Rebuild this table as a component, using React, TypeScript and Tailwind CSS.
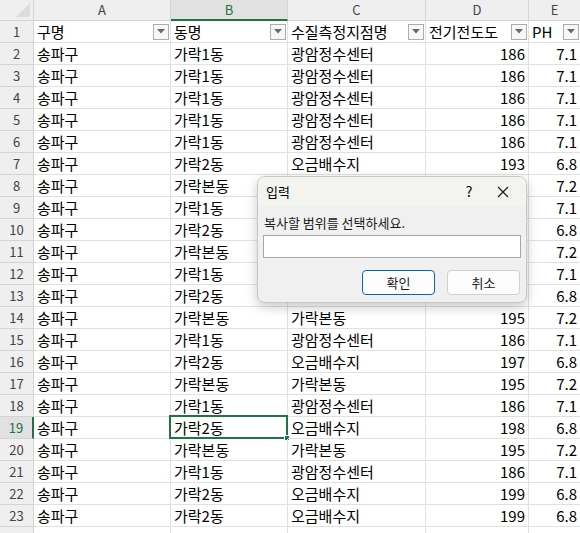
import React from "react";

const FONT = { fontFamily: '"Noto Sans CJK KR", "Noto Sans", sans-serif' };

type Row = [string, string, string, string, string];

const rows: Row[] = [
  ["송파구", "가락1동", "광암정수센터", "186", "7.1"],
  ["송파구", "가락1동", "광암정수센터", "186", "7.1"],
  ["송파구", "가락1동", "광암정수센터", "186", "7.1"],
  ["송파구", "가락1동", "광암정수센터", "186", "7.1"],
  ["송파구", "가락1동", "광암정수센터", "186", "7.1"],
  ["송파구", "가락2동", "오금배수지", "193", "6.8"],
  ["송파구", "가락본동", "", "", "7.2"],
  ["송파구", "가락1동", "", "", "7.1"],
  ["송파구", "가락2동", "", "", "6.8"],
  ["송파구", "가락본동", "", "", "7.2"],
  ["송파구", "가락1동", "", "", "7.1"],
  ["송파구", "가락2동", "", "", "6.8"],
  ["송파구", "가락본동", "가락본동", "195", "7.2"],
  ["송파구", "가락1동", "광암정수센터", "186", "7.1"],
  ["송파구", "가락2동", "오금배수지", "197", "6.8"],
  ["송파구", "가락본동", "가락본동", "195", "7.2"],
  ["송파구", "가락1동", "광암정수센터", "186", "7.1"],
  ["송파구", "가락2동", "오금배수지", "198", "6.8"],
  ["송파구", "가락본동", "가락본동", "195", "7.2"],
  ["송파구", "가락1동", "광암정수센터", "186", "7.1"],
  ["송파구", "가락2동", "오금배수지", "199", "6.8"],
  ["송파구", "가락2동", "오금배수지", "199", "6.8"],
];

const widths = ["w-[137px]", "w-[117px]", "w-[138px]", "w-[103px]", "w-[52px]"];

function FilterBtn() {
  return (
    <div className="w-[16px] h-[16px] shrink-0 border border-[#acacac] bg-[#f7f7f7] flex items-center justify-center mr-[1px]">
      <svg width="8" height="5" viewBox="0 0 8 5">
        <path d="M0 0 L8 0 L4 4.5 Z" fill="#6b6b6b" />
      </svg>
    </div>
  );
}

export default function App() {
  const headers = ["구명", "동명", "수질측정지점명", "전기전도도", "PH"];
  const letters = ["A", "B", "C", "D", "E"];
  return (
    <div className="relative w-[580px] h-[533px] overflow-hidden bg-white" style={FONT}>
      {/* column header row */}
      <div className="flex h-[21px]">
        <div className="w-[34px] shrink-0 h-[21px] bg-[#efefef] border-r border-b border-[#d4d4d4] relative flex items-end justify-end p-[3px]">
          <svg width="14" height="14" viewBox="0 0 14 14">
            <path d="M14 0 L14 14 L0 14 Z" fill="#dcdcdc" />
          </svg>
        </div>
        {letters.map((l, i) => (
          <div
            key={l}
            className={`${widths[i]} shrink-0 h-[21px] flex items-center justify-center text-[13px] border-r ${
              i === 1
                ? "bg-[#e1e1e1] text-[#217346] border-b-2 border-b-[#217346] border-r-[#d4d4d4]"
                : "bg-[#efefef] text-[#444] border-b border-[#d4d4d4]"
            }`}
          >
            {l}
          </div>
        ))}
      </div>

      {/* header row 1 */}
      <div className="flex h-[22px]">
        <div className="w-[34px] shrink-0 bg-[#efefef] border-r border-b border-[#d4d4d4] flex items-center justify-center text-[13px] text-[#444]">
          1
        </div>
        {headers.map((h, i) => (
          <div
            key={h}
            className={`${widths[i]} shrink-0 border-r border-b border-[#e1e1e1] flex items-center justify-between pl-[3px] text-[15px] text-black whitespace-nowrap overflow-hidden`}
          >
            <span className="leading-none">{h}</span>
            <FilterBtn />
          </div>
        ))}
      </div>

      {rows.map((r, ri) => {
        const num = ri + 2;
        const sel = num === 19;
        return (
          <div key={ri} className="flex h-[22px]">
            <div
              className={`w-[34px] shrink-0 border-b flex items-center justify-center text-[13px] ${
                sel
                  ? "bg-[#e1e1e1] text-[#217346] border-r-2 border-r-[#217346] border-b-[#d4d4d4]"
                  : "bg-[#efefef] text-[#444] border-r border-[#d4d4d4]"
              }`}
            >
              {num}
            </div>
            {r.map((c, ci) => (
              <div
                key={ci}
                className={`${widths[ci]} shrink-0 relative border-r border-b border-[#e1e1e1] flex items-center text-[15px] text-black whitespace-nowrap ${
                  ci >= 3 ? "justify-end pr-[3px]" : "pl-[3px]"
                }`}
              >
                <span className="leading-none">{c}</span>
                {sel && ci === 1 && (
                  <div className="absolute -left-[2px] -top-[2px] w-[119px] h-[24px] border-2 border-[#217346]">
                    <div className="absolute -right-[4px] -bottom-[4px] w-[6px] h-[6px] bg-[#217346] border border-white" />
                  </div>
                )}
              </div>
            ))}
          </div>
        );
      })}
      <div className="flex h-[22px]">
        <div className="w-[34px] shrink-0 bg-[#efefef] border-r border-[#d4d4d4]" />
        {widths.map((w, i) => (
          <div key={i} className={`${w} shrink-0 border-r border-[#e1e1e1]`} />
        ))}
      </div>

      {/* dialog */}
      <div className="absolute left-[257px] top-[176px] w-[270px] h-[127px] rounded-[8px] bg-[#f0f0f0] border border-[#c8c8c8] shadow-[0_4px_12px_rgba(0,0,0,0.22)] overflow-hidden flex flex-col">
        <div className="h-[29px] bg-[#f3f3ef] flex items-center pl-[8px] text-[13px] text-black">
          <span className="flex-1">입력</span>
          <span className="w-[20px] text-center text-[14px] mr-[18px]">?</span>
          <svg width="12" height="12" viewBox="0 0 12 12" className="mr-[17px]">
            <path d="M1 1 L11 11 M11 1 L1 11" stroke="#1a1a1a" strokeWidth="1.2" />
          </svg>
        </div>
        <div className="flex-1 flex flex-col px-[5px] pt-[8px]">
          <div className="text-[13px] leading-[18px] text-[#1a1a1a] pl-[1px]">복사할 범위를 선택하세요.</div>
          <div className="mt-[3px] h-[23px] bg-white border border-[#a6a6a6]" />
          <div className="mt-[12px] flex justify-end gap-[12px] pr-[1px]">
            <button className="w-[73px] h-[25px] rounded-[4px] bg-[#fdfdfd] border border-[#0067c0] text-[13px] text-[#1a1a1a]">
              확인
            </button>
            <button className="w-[73px] h-[25px] rounded-[4px] bg-[#fdfdfd] border border-[#d0d0d0] text-[13px] text-[#1a1a1a]">
              취소
            </button>
          </div>
        </div>
      </div>
    </div>
  );
}
